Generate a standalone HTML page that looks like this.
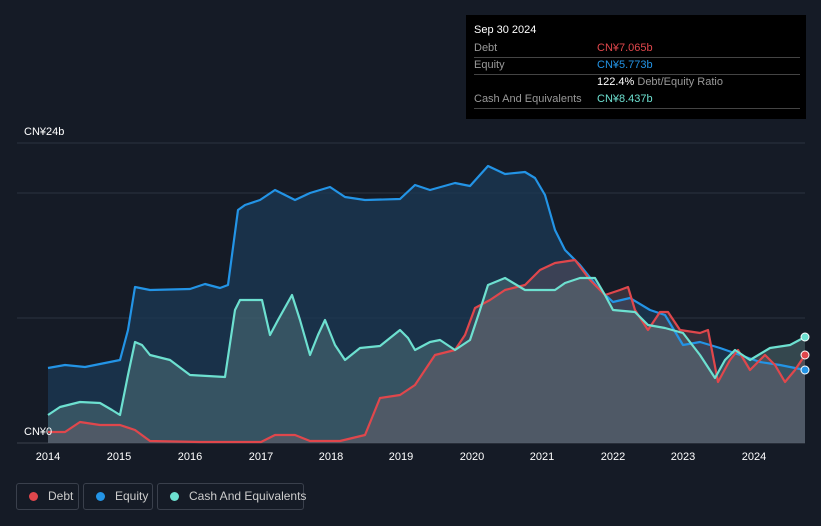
<!DOCTYPE html>
<html><head><meta charset="utf-8"><style>
body{margin:0;background:#151b26;width:821px;height:526px;overflow:hidden;font-family:"Liberation Sans",sans-serif;position:relative}
.tip{position:absolute;left:466px;top:15px;width:340px;height:104px;background:#000;color:#fff;font-size:11px}
.tip .r{position:absolute;left:8px;width:326px;border-bottom:1px solid #444;height:17px;line-height:17px}
.lab{color:#999}
.v{position:absolute;left:123px;top:0}
.leg{position:absolute;top:483px;height:27px;border:1px solid #3a404c;border-radius:3px;color:#ccc;font-size:12px;line-height:25px;box-sizing:border-box;white-space:nowrap}
.leg i{display:inline-block;width:9px;height:9px;border-radius:50%;margin:0 10px 0 12px;vertical-align:-1px}
</style></head><body>
<svg width="821" height="526" style="position:absolute;left:0;top:0">
<line x1="17" y1="143" x2="805" y2="143" stroke="#2c3340"/>
<line x1="17" y1="193" x2="805" y2="193" stroke="#2c3340"/>
<line x1="17" y1="318" x2="805" y2="318" stroke="#2c3340"/>
<line x1="17" y1="443" x2="805" y2="443" stroke="#3a404c"/>
<polygon fill="#1b3a55" fill-opacity="0.75" points="48,443 48,368 65,365 85,367 100,364 120,360 128,330 135,287 150,290 190,289 205,284 220,288 228,285 238,210 245,205 260,200 275,190 295,200 310,193 330,187 345,197 365,200 400,199 415,185 430,190 455,183 470,186 488,166 505,174 525,172 535,178 545,195 555,230 565,250 580,265 600,290 613,302 630,298 650,310 665,315 683,345 700,342 720,348 740,355 760,362 780,365 805,370 805,443"/>
<polygon fill="#5a7e80" fill-opacity="0.45" points="48,443 48,415 60,407 80,402 100,403 112,410 120,415 128,375 135,342 142,345 150,355 170,360 190,375 225,377 235,310 240,300 262,300 270,335 278,320 292,295 300,320 310,355 318,335 325,320 335,345 345,360 360,348 380,346 400,330 408,338 415,350 430,342 440,340 455,350 470,340 480,310 488,285 505,278 525,290 555,290 565,283 580,278 595,278 605,295 613,310 635,312 648,325 665,328 683,333 700,355 715,378 725,360 735,350 750,360 770,348 790,345 805,337 805,443"/>
<polygon fill="#8a6870" fill-opacity="0.3" points="48,443 48,432 65,432 80,422 100,425 120,425 135,430 150,441 200,442 261,442 275,435 295,435 310,441 340,441 365,435 380,398 400,395 415,385 435,355 455,350 465,335 475,308 490,300 505,290 525,285 540,270 555,263 575,260 590,280 605,295 620,290 628,287 635,310 648,330 660,312 668,312 680,330 700,333 708,330 718,382 730,360 738,350 750,370 765,355 775,365 785,382 795,370 805,355 805,443"/>
<polyline fill="none" stroke="#2394e6" stroke-width="2.2" stroke-linejoin="round" points="48,368 65,365 85,367 100,364 120,360 128,330 135,287 150,290 190,289 205,284 220,288 228,285 238,210 245,205 260,200 275,190 295,200 310,193 330,187 345,197 365,200 400,199 415,185 430,190 455,183 470,186 488,166 505,174 525,172 535,178 545,195 555,230 565,250 580,265 600,290 613,302 630,298 650,310 665,315 683,345 700,342 720,348 740,355 760,362 780,365 805,370"/>
<polyline fill="none" stroke="#e0474c" stroke-width="2.2" stroke-linejoin="round" points="48,432 65,432 80,422 100,425 120,425 135,430 150,441 200,442 261,442 275,435 295,435 310,441 340,441 365,435 380,398 400,395 415,385 435,355 455,350 465,335 475,308 490,300 505,290 525,285 540,270 555,263 575,260 590,280 605,295 620,290 628,287 635,310 648,330 660,312 668,312 680,330 700,333 708,330 718,382 730,360 738,350 750,370 765,355 775,365 785,382 795,370 805,355"/>
<polyline fill="none" stroke="#6de0d0" stroke-width="2.2" stroke-linejoin="round" points="48,415 60,407 80,402 100,403 112,410 120,415 128,375 135,342 142,345 150,355 170,360 190,375 225,377 235,310 240,300 262,300 270,335 278,320 292,295 300,320 310,355 318,335 325,320 335,345 345,360 360,348 380,346 400,330 408,338 415,350 430,342 440,340 455,350 470,340 480,310 488,285 505,278 525,290 555,290 565,283 580,278 595,278 605,295 613,310 635,312 648,325 665,328 683,333 700,355 715,378 725,360 735,350 750,360 770,348 790,345 805,337"/>
<circle cx="805" cy="355" r="4" fill="#e0474c" stroke="#fff" stroke-width="1"/>
<circle cx="805" cy="370" r="4" fill="#2394e6" stroke="#fff" stroke-width="1"/>
<circle cx="805" cy="337" r="4" fill="#6de0d0" stroke="#fff" stroke-width="1"/>
<g fill="#fff" font-size="11" font-family="Liberation Sans,sans-serif">
<text x="24" y="135">CN¥24b</text><text x="24" y="435">CN¥0</text>
<g text-anchor="middle"><text x="48" y="460">2014</text><text x="119" y="460">2015</text><text x="190" y="460">2016</text><text x="261" y="460">2017</text><text x="331" y="460">2018</text><text x="401" y="460">2019</text><text x="472" y="460">2020</text><text x="542" y="460">2021</text><text x="613" y="460">2022</text><text x="683" y="460">2023</text><text x="754" y="460">2024</text></g>
</g>
</svg>
<div class="tip">
<div style="position:absolute;left:8px;top:9px">Sep 30 2024</div>
<div class="r" style="top:25px"><span class="lab">Debt</span><span class="v" style="color:#e0474c">CN¥7.065b</span></div>
<div class="r" style="top:42px"><span class="lab">Equity</span><span class="v" style="color:#2394e6">CN¥5.773b</span></div>
<div style="position:absolute;left:131px;top:61px"><b style="font-weight:normal">122.4%</b> <span class="lab">Debt/Equity Ratio</span></div>
<div class="r" style="top:76px"><span class="lab">Cash And Equivalents</span><span class="v" style="color:#6de0d0">CN¥8.437b</span></div>
</div>
<div class="leg" style="left:16px;width:63px"><i style="background:#e0474c"></i>Debt</div>
<div class="leg" style="left:83px;width:70px"><i style="background:#2394e6"></i>Equity</div>
<div class="leg" style="left:157px;width:147px"><i style="background:#6de0d0"></i>Cash And Equivalents</div>
</body></html>
